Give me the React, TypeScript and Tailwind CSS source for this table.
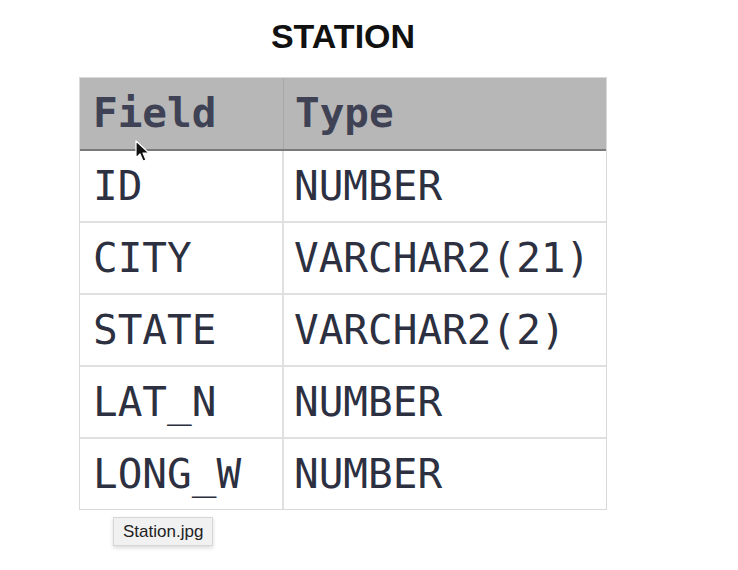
const rows = [
  ["ID", "NUMBER"],
  ["CITY", "VARCHAR2(21)"],
  ["STATE", "VARCHAR2(2)"],
  ["LAT_N", "NUMBER"],
  ["LONG_W", "NUMBER"],
]

function Cursor() {
  return (
    <svg className="absolute left-[135px] top-[140px]" width="16" height="24" viewBox="0 0 16 24">
      <path d="M1 1 L1 18 L5 14 L8 21 L11 20 L8 13 L14 13 Z" fill="#111" stroke="#fff" strokeWidth="1.2" strokeLinejoin="round" />
    </svg>
  )
}

export default function App() {
  return (
    <div className="relative w-[738px] h-[570px] bg-white overflow-hidden">
      <div className="pl-[79px] pt-[16px]">
        <h1 className="w-[528px] text-center text-[34px] leading-[40px] font-bold text-[#111] font-['Liberation_Sans',Arial,sans-serif]">
          STATION
        </h1>
        <div className="mt-[21px] w-[528px] border border-[#d9d9d9] font-['DejaVu_Sans_Mono',monospace] text-[41px] text-[#2c3040]">
          <div className="flex h-[73px] bg-[#b7b7b7] border-b-2 border-[#7a7a7a] font-bold text-[#3e4254]">
            <div className="w-[204px] pl-[13px] flex items-center border-r border-[#a9a9a9]">Field</div>
            <div className="flex-1 pl-[11px] flex items-center">Type</div>
          </div>
          {rows.map(([f, t], i) => (
            <div key={f} className={`flex ${i < rows.length - 1 ? "h-[72px] border-b-2 border-[#e0e0e0]" : "h-[70px]"}`}>
              <div className="w-[204px] pl-[13px] pt-[2px] flex items-center border-r-2 border-[#e0e0e0]">{f}</div>
              <div className="flex-1 pl-[10px] pt-[2px] flex items-center">{t}</div>
            </div>
          ))}
        </div>
      </div>
      <div className="absolute left-[113px] top-[517px] h-[29px] px-[9px] flex items-center bg-[#f1f1f1] border border-[#d6d6d6] shadow-[0_2px_4px_rgba(0,0,0,0.15)] text-[17px] text-[#222] font-['Liberation_Sans',Arial,sans-serif]">
        Station.jpg
      </div>
      <Cursor />
    </div>
  )
}
